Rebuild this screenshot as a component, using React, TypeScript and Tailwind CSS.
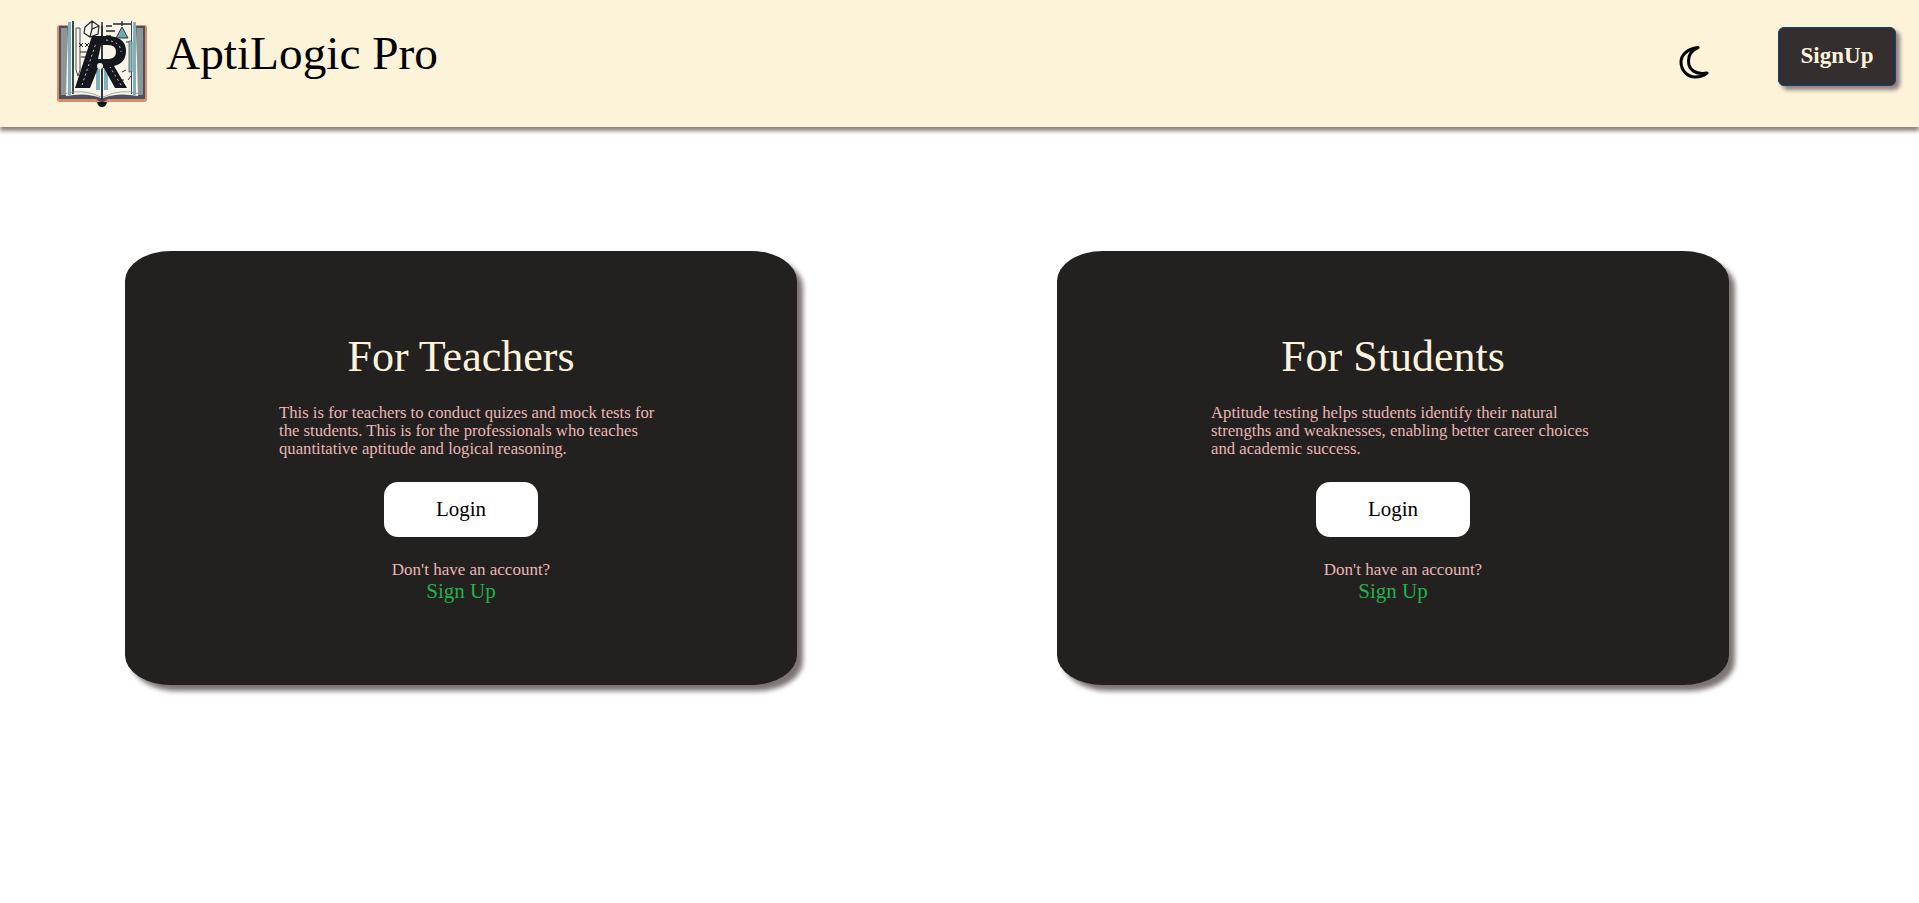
function Moon() {
  return (
    <svg width="30" height="34" viewBox="0 0 30 34" className="ml-auto -mt-[3px] shrink-0">
      <path d="M19 2.5 C7 4 2 11 2 17 C2 26 9 32 16 32 C21 32 25 31 28 28 C17 30 9.5 25 9.5 16 C9.5 10 13 5 19 2.5 Z" fill="none" stroke="#000" strokeWidth="3" strokeLinejoin="round" />
    </svg>
  );
}

function Logo() {
  return (
    <svg width="92" height="92" viewBox="0 0 92 92" className="shrink-0 blur-[0.4px]">
      <path d="M4 7 H88 Q91 7 91 10 V81 Q91 84 88 84 H54 Q50 84 50 86 Q46 90 42 86 Q42 84 38 84 H4 Q1 84 1 81 V10 Q1 7 4 7 Z" fill="#d98a70" />
      <path d="M3 8 H89 V81 H52 L46 85 L40 81 H3 Z" fill="#4b5257" />
      <path d="M5 10 H11 V77 H5 Z M81 10 H87 V77 H81 Z" fill="#8d9599" />
      <path d="M12 4 Q30 0 45 5 V80 Q30 74 10 78 L12 4 Z" fill="#f7f5ea" />
      <path d="M47 5 Q62 0 80 4 L82 78 Q62 74 47 80 Z" fill="#f7f5ea" />
      <path d="M12 4 H15 V77 H12 Z M77 4 H80 V77 H77 Z" fill="#7fb3ba" />
      <path d="M16 3 H18 V76 H16 Z M75 3 H76 V76 H75 Z" fill="#3f464b" />
      <path d="M46 4 V82" stroke="#2a2d30" strokeWidth="1.5" />
      <path d="M29 9 L36 3 L43 8 L42 16 L34 19 L28 15 Z M36 3 L36 11 L43 8 M36 11 L34 19" fill="none" stroke="#25282b" strokeWidth="1.2" />
      <path d="M66 9 L72 20 H60 Z" fill="#6ea9b0" stroke="#25282b" strokeWidth="0.9" />
      <path d="M57 6 H75 M66 3 V8 M50 8 H56 M50 13 H59 M50 18 H55" stroke="#25282b" strokeWidth="1.3" />
      <path d="M20 10 V52 L22 58 L24 52 V10 Z" fill="#f7f5ea" stroke="#3a3f43" strokeWidth="0.9" />
      <path d="M23 25 L27 29 M27 25 L23 29 M29 25 L33 29 M33 25 L29 29 M24 34 H32 M25 39 H31 M70 24 H73 M65 62 H68 M30 64 H33 M66 54 L70 52 M72 62 L75 58" stroke="#25282b" strokeWidth="1" />
      <path d="M73 23 H76 V54 H73 Z" fill="#8fc0c6" stroke="#3a3f43" strokeWidth="0.7" />
      <path d="M48 48 H52 V72 H48 Z M40 48 H44 V72 H40 Z" fill="#7fb3ba" />
      <path d="M36 18 H54 Q70 20 70 33 Q70 45 58 48 L71 70 H59 L48 50 H42 L34 70 H19 Z M45 27 L42 41 H53 Q60 40 60 34 Q60 27 52 27 Z" fill="#15171c" fillRule="evenodd" />
      <path d="M26 67 L40 25 M65 67 L54 49 M50 22 Q65 24 65 34" stroke="#d7dcdc" strokeWidth="0.9" strokeDasharray="2 3" fill="none" />
      <circle cx="44" cy="48" r="3" fill="#f1ede0" />
      <path d="M8 76 Q26 70 45 79 M84 76 Q66 70 47 79" stroke="#8d9599" strokeWidth="0.8" fill="none" />
      <path d="M41 84 H51 Q50 89 46 89 Q42 89 41 84 Z" fill="#111" />
    </svg>
  );
}

function Card({ title, text }: { title: string; text: string }) {
  return (
    <section className="flex h-[434px] w-[672px] flex-col items-center rounded-[46px/30px] bg-[#22211f] pt-[79px] shadow-[6px_6px_5px_#7d7474]">
      <h2 className="text-[44px] leading-[54px] text-[#fdf3dc]">{title}</h2>
      <p className="ml-[154px] mt-[20px] w-[384px] self-start text-[16.7px] leading-[18px] text-[#eab5b5]">{text}</p>
      <button className="mt-[24px] h-[55px] w-[154px] rounded-[14px] bg-white text-[21px] text-black">Login</button>
      <p className="ml-[20px] mt-[24px] text-[17px] leading-[18px] text-[#eab5b5]">Don't have an account?</p>
      <a className="text-[21px] leading-[24px] text-[#22b14c]">Sign Up</a>
    </section>
  );
}

export default function App() {
  return (
    <div className="min-h-[903px] bg-white font-['Liberation_Serif',serif]">
      <header className="flex h-[127px] items-center bg-[#fcf3d9] pl-[56px] pr-[23px] shadow-[0_4px_4px_#8f8080]">
        <Logo />
        <h1 className="ml-[18px] -mt-[20px] text-[47.3px] text-black">AptiLogic Pro</h1>
        <Moon />
        <button className="ml-[69px] -mt-[15px] h-[59px] w-[118px] rounded-[6px] border border-[#07457a] bg-[#342e2e] text-[23px] font-bold text-[#fdf3dc] shadow-[4px_4px_4px_#8f8080]">SignUp</button>
      </header>
      <main className="flex gap-[260px] pl-[125px] pt-[124px]">
        <Card title="For Teachers" text="This is for teachers to conduct quizes and mock tests for the students. This is for the professionals who teaches quantitative aptitude and logical reasoning." />
        <Card title="For Students" text="Aptitude testing helps students identify their natural strengths and weaknesses, enabling better career choices and academic success." />
      </main>
    </div>
  );
}
